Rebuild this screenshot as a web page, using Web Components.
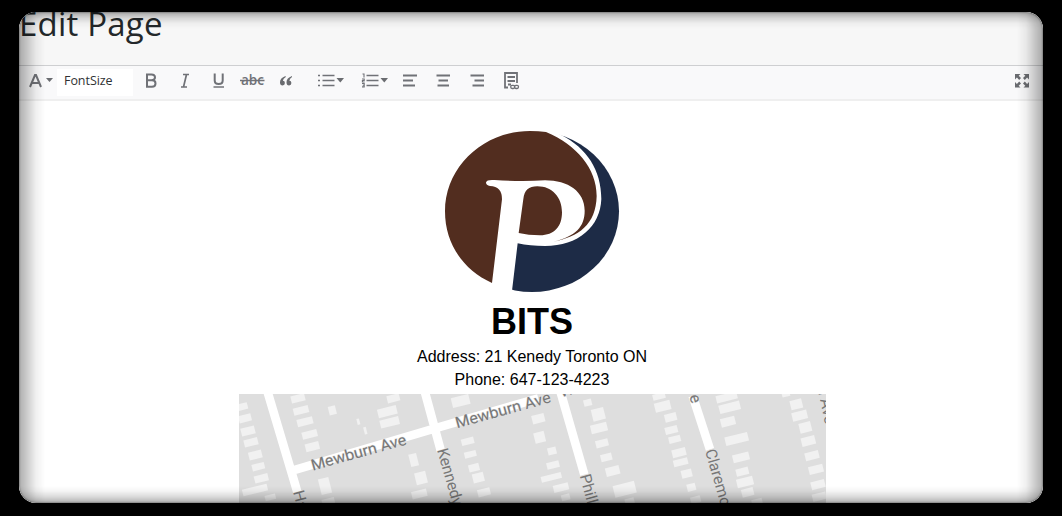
<!DOCTYPE html>
<html lang="en"><head><meta charset="utf-8"><title>Edit Page</title>
<style>html,body{margin:0;background:#000;height:100%;overflow:hidden}</style></head>
<body><edit-window><page-heading>Edit Page</page-heading><editor-toolbar></editor-toolbar>
<editor-content><brand-logo slot="logo"></brand-logo><span slot="name">BITS</span><span slot="address">Address: 21 Kenedy Toronto ON</span><span slot="phone">Phone: 647-123-4223</span><street-map slot="map"></street-map></editor-content></edit-window>
<script>
const define=(name,html,init)=>customElements.define(name,class extends HTMLElement{
  constructor(){super();const t=document.createElement('template');t.innerHTML=html;
    this.attachShadow({mode:'open'}).append(t.content.cloneNode(true));}
  connectedCallback(){if(init)init(this);}
});

define('edit-window',`<style>
:host{display:block;box-sizing:border-box;height:516px;padding:12px 19px 13px;background:#000}
.frame{position:relative;height:491px;border-radius:17px;overflow:hidden;background:#fff}
.frame::after{content:"";position:absolute;inset:0;border-radius:17px;pointer-events:none;
 box-shadow:inset 0 0 2px rgba(0,0,0,.65);}
.frame::before{content:"";position:absolute;z-index:2;inset:0;pointer-events:none;border-radius:17px;
 background:linear-gradient(90deg,rgba(0,0,0,.32),rgba(0,0,0,.2) 8px,rgba(0,0,0,.06) 17px,transparent 26px,transparent calc(100% - 26px),rgba(0,0,0,.06) calc(100% - 17px),rgba(0,0,0,.2) calc(100% - 8px),rgba(0,0,0,.32)),
 linear-gradient(rgba(0,0,0,.32),rgba(0,0,0,.14) 6px,rgba(0,0,0,.04) 11px,transparent 17px,transparent calc(100% - 17px),rgba(0,0,0,.04) calc(100% - 12px),rgba(0,0,0,.15) calc(100% - 6px),rgba(0,0,0,.32))}
</style><div class="frame"><slot></slot></div>`);

define('page-heading',`<style>
:host{display:block;box-sizing:border-box;height:53px;background:#f7f7f7;color:#23282a;font:33px/45px "Open Sans","Noto Sans",sans-serif;white-space:nowrap;overflow:hidden}
h1{margin:-11px 0 0;font:inherit;letter-spacing:.2px}
</style><h1><slot></slot></h1>`);

define('tool-icon',`<style>
:host{display:block;flex:none}svg{display:block;fill:none;stroke:#707277;stroke-width:2}
.f{fill:#6a6c70;stroke:none}
text{fill:#707277;stroke:none;font-family:"Open Sans",sans-serif}
</style><svg height="34"></svg>`,el=>{
  const a=el.dataset,s=el.shadowRoot.querySelector('svg');
  s.setAttribute('width',a.w);s.setAttribute('viewBox',a.x+' 66 '+a.w+' 34');s.innerHTML=icons[a.icon];});

const icons={
 color:'<path d="M30 87 35 75h1l5 12M32 83h7"/><path class="f" d="M46 78h7l-3.500 4z"/>',
 bold:'<path d="M147 74.500h4.500q3.500 0 3.500 2.800t-3.500 2.900h-4.500h5q3.500 0 3.500 3.200t-3.500 3.300h-5z"/>',
 italic:'<path d="M183 74.500h6M181 87h6M186.500 74.500 183.500 87" stroke-width="1.700"/>',
 underline:'<path d="M214.700 73.500v7q0 3.500 4 3.500t4-3.500v-7"/><path d="M213.500 87h10.500" stroke-width="1.600"/>',
 strike:'<text x="241" y="85" font-size="14" font-weight="600" textLength="23" lengthAdjust="spacingAndGlyphs">abc</text><path d="M240 80.500h24.500" stroke-width="1.600"/>',
 quote:'<path class="f" d="M285.500 76q-5.500 2-5.500 6.200 0 3.300 2.600 3.300 2.300 0 2.300-2.400t-2-2.400q.2-2 2.900-3.600zM292 76q-5.500 2-5.500 6.200 0 3.300 2.600 3.300 2.300 0 2.300-2.400t-2-2.400q.2-2 2.600-3.600z"/>',
 ul:'<path d="M322.500 75.500h12M322.500 80.500h12M322.500 85.500h12M318 75.500h2M318 80.500h2M318 85.500h2" stroke-width="1.700"/><path class="f" d="M336.500 78h7.500l-3.700 4.500z"/>',
 ol:'<path d="M366.500 75.500h12M366.500 80.500h12M366.500 85.500h12" stroke-width="1.700"/><path d="M362.500 74h1.500v3.500M362 79h2.200v1.500h-1.800v1.500h2.300M362 83.500h2.200v1.700h-1.500m1.500 0v1.700h-2.200" stroke-width="1.100"/><path class="f" d="M380.500 78h7.500l-3.700 4.500z"/>',
 left:'<path d="M403 75.500h14M403 80.500h10M403 85.500h12"/>',
 center:'<path d="M436.500 75.500h13.500M438.500 80.500h9.500M437.500 85.500h11.500"/>',
 right:'<path d="M470.500 75.500h13.500M474.500 80.500h9.500M472.500 85.500h11.500"/>',
 source:'<path d="M508 87.500h-3V73h12v10M507.500 77h7.500M507.500 81h7.500M508 84.500h3" stroke-width="1.800"/><rect x="510.700" y="85.300" width="4" height="3.200" rx="1.400" stroke-width="1.300"/><rect x="514.500" y="85.300" width="4" height="3.200" rx="1.400" stroke-width="1.300"/>',
 expand:'<path class="f" d="M1015 74h5.500l-1.800 1.800 2.300 2.300-1.800 1.800-2.300-2.300-1.900 1.900zM1029 74h-5.500l1.800 1.800-2.300 2.300 1.800 1.800 2.300-2.300 1.900 1.900zM1015 87.500h5.500l-1.800-1.800 2.300-2.300-1.800-1.800-2.300 2.300-1.900-1.900zM1029 87.500h-5.500l1.800-1.800-2.300-2.300 1.800-1.800 2.300 2.300 1.900-1.900z"/>'
};
const icon=(n,x,w)=>`<tool-icon data-icon="${n}" data-x="${x}" data-w="${w}"></tool-icon>`;
define('editor-toolbar',`<style>
:host{display:flex;box-sizing:border-box;height:36px;padding:0 7px 0 8px;border-top:1px solid #cecfd1;border-bottom:2px solid #efefef;background:#f9f9fa}
.size{box-sizing:border-box;width:76px;height:27px;margin:3px 1px 0 0;padding-left:7px;background:#fff;color:#303234;font:12.5px/23px "Open Sans","Noto Sans",sans-serif;flex:none}
.size span{letter-spacing:-.05px}
.gap{flex:1}
</style>${icon('color',27,30)}<div class="size"><span>FontSize</span></div>`+
[['bold',134,34],['italic',168,34],['underline',202,33],['strike',235,34],['quote',269,40],['ul',309,44],['ol',353,40],['left',393,33],['center',426,34],['right',460,34],['source',494,34]].map(i=>icon(...i)).join('')+
`<div class="gap"></div>${icon('expand',1010,26)}`);

define('brand-logo',`<style>:host{display:block}svg{display:block}</style>
<svg width="175" height="163" viewBox="45 30 525 489">
<ellipse cx="306" cy="274" rx="261" ry="242" fill="#1d2b46"/>
<path fill="#fff" d="M345 20 395 46C470 85 514 150 514 237C511 320 445 378 345 378Q300 378 263 370L246 512 238 530 20 530 20 20z"/>
<path fill="#522d1f" d="M348 36C440 75 500 145 500 228C498 315 445 350 370 365C438 348 464 320 464 272C464 215 415 181 345 181Q270 185 194 180Q170 178 168 187Q168 197 180 198Q216 199 216 238L186 489C100 450 45 372 45 274C45 140 160 33 300 33Q326 33 348 36z"/>
<path fill="#522d1f" d="M266 339 280 237C283 211 296 199 322 199C367 199 396 232 396 277C396 320 373 346 330 346Q295 346 266 339z"/>
</svg>`);

const houses=(list)=>list.map(([x,y,w,h])=>`<rect x="${-w/2}" y="${-h/2}" width="${w}" height="${h}" transform="translate(${x} ${y}) rotate(-14)"/>`).join('');
const west=[[22,50,32,20],[30,85,38,22],[39,123,42,24],[48,157,42,22],[61,195,40,24],[70,230,38,20],[79,265,42,22],[60,300,76,20],[106,322,32,16],[189,25,42,22],[198,61,46,22],[210,95,48,22],[224,133,46,22],[232,170,42,24],[292,61,22,26],[370,95,8,18],[391,122,8,22],[475,25,38,22],[457,65,58,26],[464,97,58,24],[677,33,54,30],[698,154,38,20],[706,193,36,18],[717,233,32,22],[730,263,34,28],[747,307,38,22],[536,210,24,38],[558,264,34,36],[553,312,46,22],[270,288,32,48],[280,334,38,18]];
const east=[[25,86,38,26],[29,142,32,32],[66,183,26,22],[69,225,38,20],[64,262,62,18],[93,293,46,22],[107,322,26,18],[173,38,24,20],[205,73,38,36],[207,114,50,26],[216,160,38,22],[229,202,34,22],[248,243,42,26],[284,298,66,36],[299,334,28,18],[387,19,38,18],[398,49,48,28],[422,82,36,24],[424,120,38,22],[434,148,36,20],[447,188,42,24],[452,217,44,20],[470,251,32,24],[484,292,26,22],[497,329,30,20],[590,22,64,22],[599,52,64,26],[594,95,44,26],[620,147,70,26],[633,202,50,24],[637,245,38,22],[645,276,50,26],[653,307,36,24],[681,335,32,16],[768,14,24,12],[799,43,36,28],[809,77,46,26],[826,112,36,30],[835,153,42,26],[846,197,42,24],[858,238,44,24],[864,284,42,24],[868,320,42,22]];
define('street-map',`<style>:host{display:block}svg{display:block}text{fill:#777;font:47px Roboto,sans-serif;paint-order:stroke;stroke:#e2e2e2;stroke-width:3px}.r{fill:none;stroke:#fff;stroke-width:26}.h{fill:#f1f1f1}</style>
<svg width="587" height="109" viewBox="0 0 587 109"><rect width="587" height="109" fill="#dedede"/>
<g transform="translate(-4 -4) scale(.33333)">
<g class="h">${houses(west)}</g>
<path class="r" d="M96 0 180 282 188 310M568 0 618 184M172 242 610 112 910 25"/>
<text transform="translate(233 242) rotate(-15.500)" textLength="295" lengthAdjust="spacingAndGlyphs">Mewburn Ave</text>
<text transform="translate(666 115) rotate(-15.500)" textLength="295" lengthAdjust="spacingAndGlyphs">Mewburn Ave</text>
<text transform="translate(606 180) rotate(74)" textLength="176">Kennedy</text>
<text transform="translate(174 306) rotate(75)">Harris</text></g>
<g transform="translate(291 -4) scale(.33333)">
<g class="h">${houses(east)}</g>
<path class="r" d="M90 0 163 254M488 18 540 178"/>
<text transform="translate(94 22) rotate(-15)" font-size="46">W</text>
<text transform="translate(149 257) rotate(75)">Phillip</text>
<text transform="translate(478 18) rotate(74)">e</text>
<text transform="translate(525 182) rotate(74)">Claremont</text>
<text transform="translate(862 -8) rotate(78)">n Ave</text></g>
</svg>`);

define('editor-content',`<style>
:host{display:flex;flex-direction:column;align-items:center;box-sizing:border-box;height:402px;padding:29px 0 0 2px;background:#fff;color:#000;font-family:"Liberation Sans",Arial,sans-serif}
h2{margin:8px 0 0;font-size:36px;line-height:42px;font-weight:bold}
p{margin:0;font-size:16px;line-height:23px;white-space:nowrap}
.first{margin-top:2px}.map{margin-top:3px}
</style><slot name="logo"></slot><h2><slot name="name"></slot></h2><p class="first"><slot name="address"></slot></p><p><slot name="phone"></slot></p><div class="map"><slot name="map"></slot></div>`);
</script></body></html>
